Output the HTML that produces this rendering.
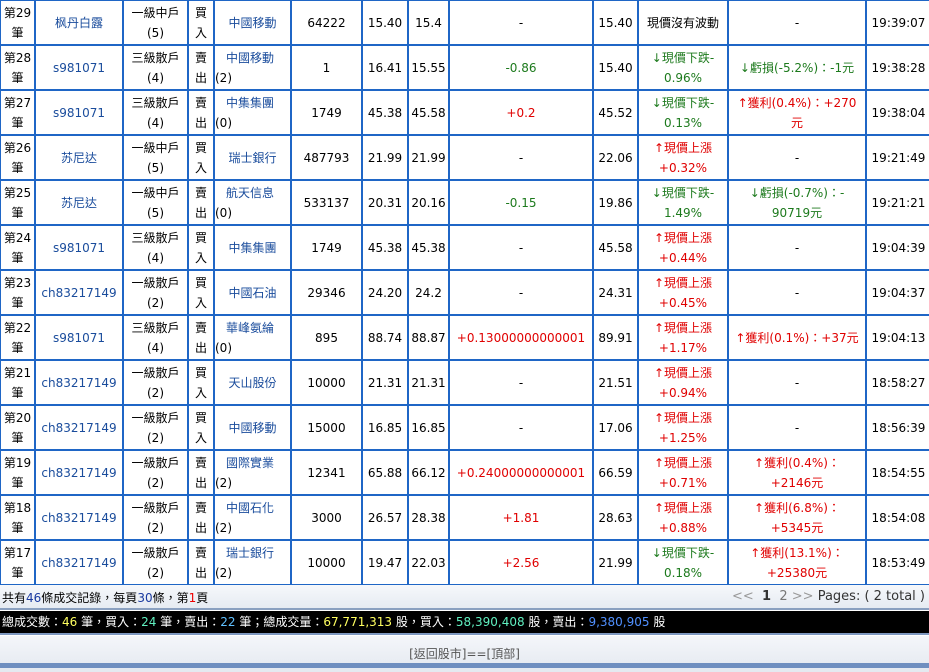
<!DOCTYPE html>
<html><head><meta charset="utf-8"><style>
html,body{margin:0;padding:0;background:#fff;width:929px;height:672px;overflow:hidden;position:relative}
body{font-family:"DejaVu Sans","Noto Sans CJK TC",sans-serif;font-size:12px;color:#000}
table{position:absolute;left:-1px;top:-1px;border-collapse:collapse;table-layout:fixed;width:931px}
tr{height:45px}
td{border:2px solid #1f66c6;height:43px;padding:0;text-align:center;vertical-align:middle;line-height:20px;overflow:hidden;white-space:nowrap}
.b{color:#1a4c9c}
.g{color:#1d7a1d}
.r{color:#e00000}
.l{text-align:left}
.foot{position:absolute;left:0;top:585px;width:929px;height:23px;background:linear-gradient(#f6f8fb,#e6ebf2);border-bottom:2px solid #8aa0c0}
.black{position:absolute;left:0;top:611px;width:929px;height:22px;background:#000;color:#fff;line-height:22px;border-bottom:2px solid #7e98c0}
.bot{position:absolute;left:0;top:636px;width:929px;height:36px;background:linear-gradient(#f4f6fa,#e4e9f0)}
.bar{position:absolute;left:0;top:663px;width:929px;height:5px;background:#6f8fc0}
</style></head><body>
<table>
<colgroup><col style="width:35px"><col style="width:88px"><col style="width:65px"><col style="width:26px"><col style="width:77px"><col style="width:71px"><col style="width:46px"><col style="width:41px"><col style="width:144px"><col style="width:45px"><col style="width:90px"><col style="width:138px"><col style="width:65px"></colgroup>
<tr><td>第29<br>筆</td><td class="b">枫丹白露</td><td>一級中戶<br>(5)</td><td>買<br>入</td><td class="b">中國移動</td><td>64222</td><td>15.40</td><td>15.4</td><td>-</td><td>15.40</td><td>現價沒有波動</td><td>-</td><td>19:39:07</td></tr>
<tr><td>第28<br>筆</td><td class="b">s981071</td><td>三級散戶<br>(4)</td><td>賣<br>出</td><td class="l"><span class="b" style="padding-left:11px">中國移動</span><br>(2)</td><td>1</td><td>16.41</td><td>15.55</td><td class="g">-0.86</td><td>15.40</td><td class="g">↓現價下跌-<br>0.96%</td><td class="g">↓虧損(-5.2%)：-1元</td><td>19:38:28</td></tr>
<tr><td>第27<br>筆</td><td class="b">s981071</td><td>三級散戶<br>(4)</td><td>賣<br>出</td><td class="l"><span class="b" style="padding-left:11px">中集集團</span><br>(0)</td><td>1749</td><td>45.38</td><td>45.58</td><td class="r">+0.2</td><td>45.52</td><td class="g">↓現價下跌-<br>0.13%</td><td class="r">↑獲利(0.4%)：+270<br>元</td><td>19:38:04</td></tr>
<tr><td>第26<br>筆</td><td class="b">苏尼达</td><td>一級中戶<br>(5)</td><td>買<br>入</td><td class="b">瑞士銀行</td><td>487793</td><td>21.99</td><td>21.99</td><td>-</td><td>22.06</td><td class="r">↑現價上漲<br>+0.32%</td><td>-</td><td>19:21:49</td></tr>
<tr><td>第25<br>筆</td><td class="b">苏尼达</td><td>一級中戶<br>(5)</td><td>賣<br>出</td><td class="l"><span class="b" style="padding-left:11px">航天信息</span><br>(0)</td><td>533137</td><td>20.31</td><td>20.16</td><td class="g">-0.15</td><td>19.86</td><td class="g">↓現價下跌-<br>1.49%</td><td class="g">↓虧損(-0.7%)：-<br>90719元</td><td>19:21:21</td></tr>
<tr><td>第24<br>筆</td><td class="b">s981071</td><td>三級散戶<br>(4)</td><td>買<br>入</td><td class="b">中集集團</td><td>1749</td><td>45.38</td><td>45.38</td><td>-</td><td>45.58</td><td class="r">↑現價上漲<br>+0.44%</td><td>-</td><td>19:04:39</td></tr>
<tr><td>第23<br>筆</td><td class="b">ch83217149</td><td>一級散戶<br>(2)</td><td>買<br>入</td><td class="b">中國石油</td><td>29346</td><td>24.20</td><td>24.2</td><td>-</td><td>24.31</td><td class="r">↑現價上漲<br>+0.45%</td><td>-</td><td>19:04:37</td></tr>
<tr><td>第22<br>筆</td><td class="b">s981071</td><td>三級散戶<br>(4)</td><td>賣<br>出</td><td class="l"><span class="b" style="padding-left:11px">華峰氨綸</span><br>(0)</td><td>895</td><td>88.74</td><td>88.87</td><td class="r">+0.13000000000001</td><td>89.91</td><td class="r">↑現價上漲<br>+1.17%</td><td class="r">↑獲利(0.1%)：+37元</td><td>19:04:13</td></tr>
<tr><td>第21<br>筆</td><td class="b">ch83217149</td><td>一級散戶<br>(2)</td><td>買<br>入</td><td class="b">天山股份</td><td>10000</td><td>21.31</td><td>21.31</td><td>-</td><td>21.51</td><td class="r">↑現價上漲<br>+0.94%</td><td>-</td><td>18:58:27</td></tr>
<tr><td>第20<br>筆</td><td class="b">ch83217149</td><td>一級散戶<br>(2)</td><td>買<br>入</td><td class="b">中國移動</td><td>15000</td><td>16.85</td><td>16.85</td><td>-</td><td>17.06</td><td class="r">↑現價上漲<br>+1.25%</td><td>-</td><td>18:56:39</td></tr>
<tr><td>第19<br>筆</td><td class="b">ch83217149</td><td>一級散戶<br>(2)</td><td>賣<br>出</td><td class="l"><span class="b" style="padding-left:11px">國際實業</span><br>(2)</td><td>12341</td><td>65.88</td><td>66.12</td><td class="r">+0.24000000000001</td><td>66.59</td><td class="r">↑現價上漲<br>+0.71%</td><td class="r">↑獲利(0.4%)：<br>+2146元</td><td>18:54:55</td></tr>
<tr><td>第18<br>筆</td><td class="b">ch83217149</td><td>一級散戶<br>(2)</td><td>賣<br>出</td><td class="l"><span class="b" style="padding-left:11px">中國石化</span><br>(2)</td><td>3000</td><td>26.57</td><td>28.38</td><td class="r">+1.81</td><td>28.63</td><td class="r">↑現價上漲<br>+0.88%</td><td class="r">↑獲利(6.8%)：<br>+5345元</td><td>18:54:08</td></tr>
<tr><td>第17<br>筆</td><td class="b">ch83217149</td><td>一級散戶<br>(2)</td><td>賣<br>出</td><td class="l"><span class="b" style="padding-left:11px">瑞士銀行</span><br>(2)</td><td>10000</td><td>19.47</td><td>22.03</td><td class="r">+2.56</td><td>21.99</td><td class="g">↓現價下跌-<br>0.18%</td><td class="r">↑獲利(13.1%)：<br>+25380元</td><td>18:53:49</td></tr>
</table>
<div class="foot"><span style="position:absolute;left:2px;top:4px">共有<span style="color:#1a3aa0">46</span>條成交記錄，每頁<span style="color:#1a3aa0">30</span>條，第<span style="color:#e00">1</span>頁</span><span style="position:absolute;right:4px;top:4px;color:#333;font-size:13px"><span style="color:#999">&lt;&lt;</span>&nbsp;&nbsp;<b>1</b>&nbsp;&nbsp;<span style="color:#777">2</span>&nbsp;<span style="color:#999">&gt;&gt;</span>&nbsp;Pages: ( 2 total )</span></div>
<div class="black"><span style="padding-left:2px">總成交數：<span style="color:#ffff60">46</span> 筆，買入：<span style="color:#60f0c0">24</span> 筆，賣出：<span style="color:#60c0ff">22</span> 筆；總成交量：<span style="color:#ffff60">67,771,313</span> 股，買入：<span style="color:#60f0c0">58,390,408</span> 股，賣出：<span style="color:#5090ff">9,380,905</span> 股</span></div>
<div class="bot"><div style="position:absolute;left:0;width:929px;top:9px;text-align:center;color:#555">[返回股市]==[頂部]</div></div>
<div class="bar"></div>
</body></html>
